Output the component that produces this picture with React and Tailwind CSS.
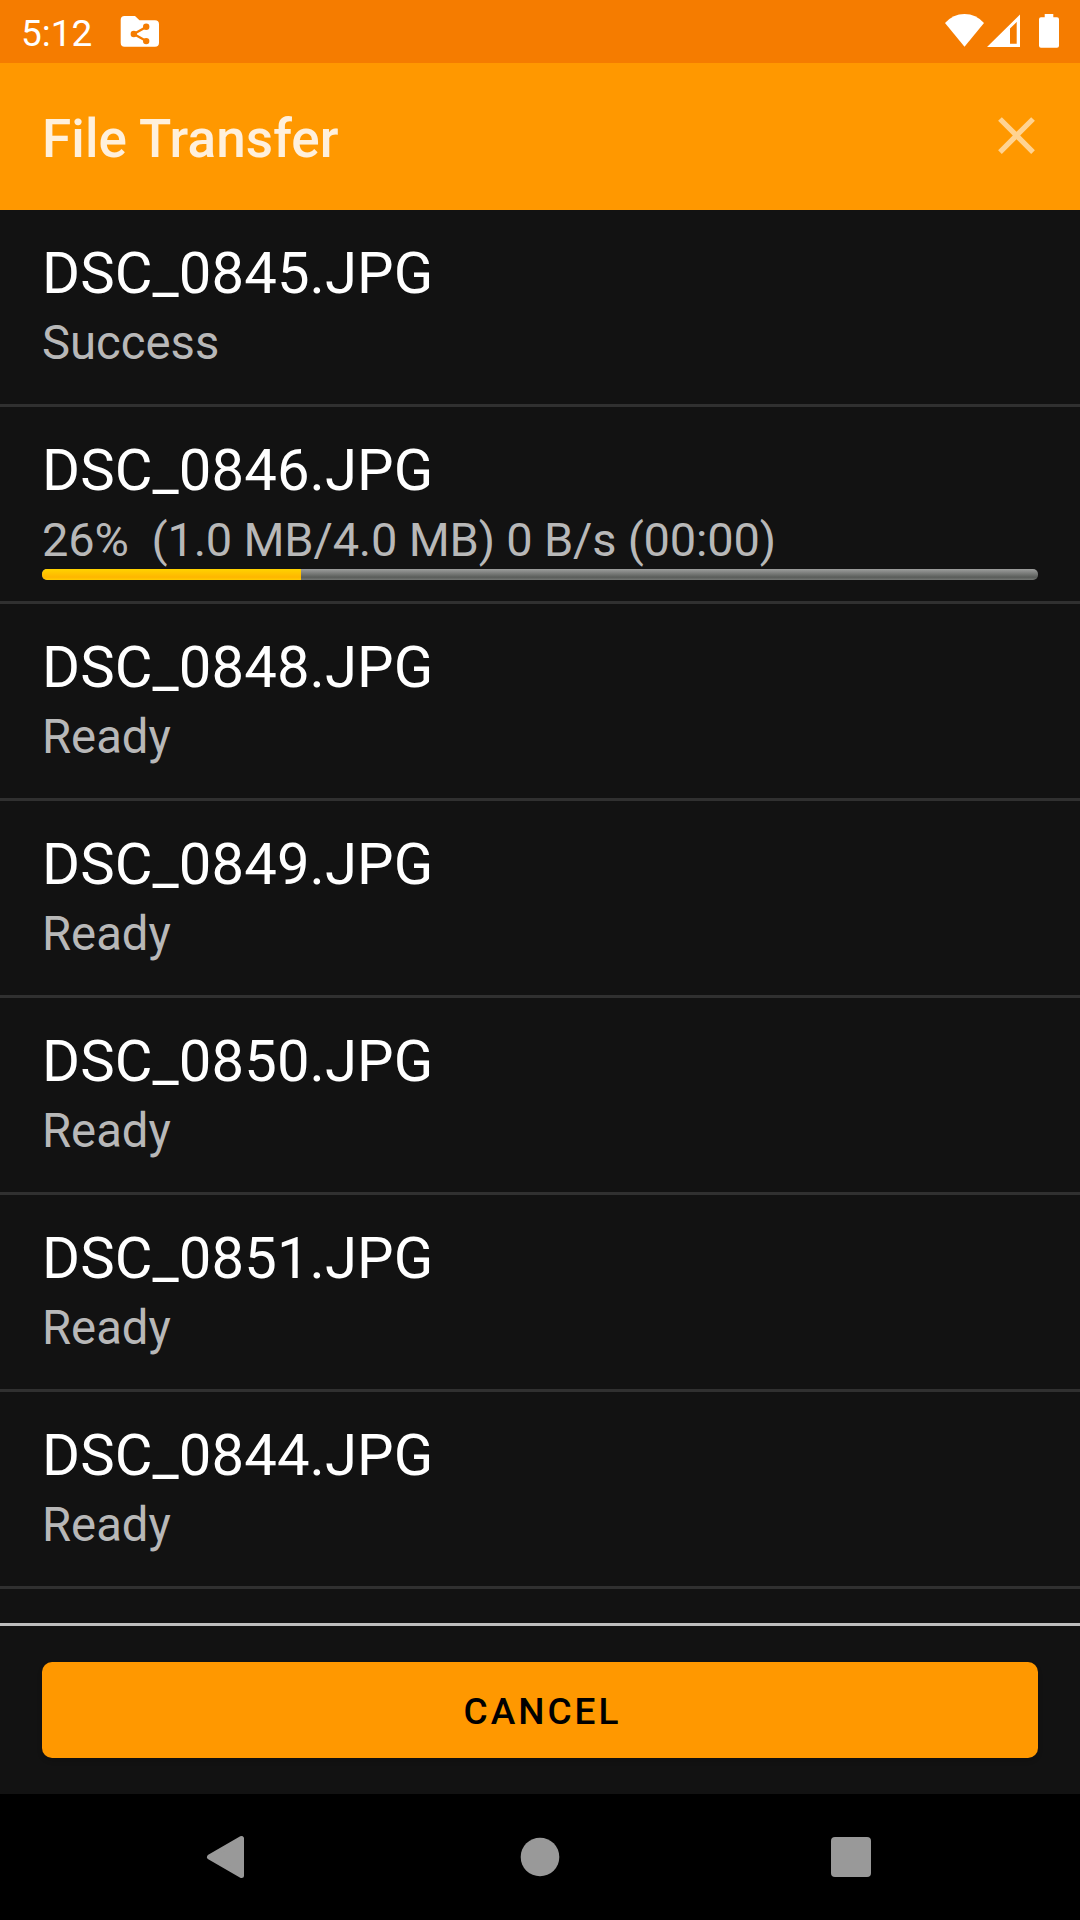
import React from "react";

const files = [
  ["DSC_0845.JPG", "Success"],
  ["DSC_0846.JPG", "26%  (1.0 MB/4.0 MB) 0 B/s (00:00)", 26],
  ["DSC_0848.JPG", "Ready"],
  ["DSC_0849.JPG", "Ready"],
  ["DSC_0850.JPG", "Ready"],
  ["DSC_0851.JPG", "Ready"],
  ["DSC_0844.JPG", "Ready"],
];

function FileRow({ name, status, progress }) {
  const active = progress !== undefined;
  return (
    <li className="flex h-[197px] flex-col border-b-3 border-[#303030] px-[42px] pt-[28px]">
      <div className="h-[70px] text-[58px] leading-[70px] tracking-[0.1px] text-white">{name}</div>
      <div className={`h-[70px] whitespace-pre leading-[70px] text-[#b8b8b8] ${active ? "text-[47px] tracking-[-0.2px]" : "text-[47.25px]"}`}>{status}</div>
      {active && (
        <div className="-mt-[6px] h-[11px] shrink-0 overflow-hidden rounded-[5px] bg-[linear-gradient(#9d9e9d,#5a5d5a_75%,#747674)]">
          <div className="h-full bg-[linear-gradient(#ffd300,#ffb600_75%,#ffcb00)]" style={{ width: `${progress}%` }} />
        </div>
      )}
    </li>
  );
}

export default function App() {
  return (
    <div className="flex h-[1920px] w-[1080px] flex-col overflow-hidden bg-[#121212] font-['Roboto',sans-serif]">
      <div className="flex h-[63px] shrink-0 items-center bg-[#f57c00] pl-[21px] text-white">
        <span className="mt-[4px] w-[99px] text-[37px] leading-[43px]">5:12</span>
        <svg className="h-[63px] w-[40px]" viewBox="120 0 40 63">
          <path fill="#fff" d="M124.500 16H135L139.500 20.200H155Q159 20.200 159 24.200V42.800Q159 46.800 155 46.800H124.500Q120.700 46.800 120.700 42.800V20Q120.700 16 124.500 16Z" />
          <path fill="none" stroke="#f57c00" strokeWidth="2.300" d="M146.200 27 133.800 34l12.400 7" />
          <g fill="#f57c00">
            <circle cx="146.200" cy="26.800" r="3.200" />
            <circle cx="133.800" cy="34" r="3.200" />
            <circle cx="146.200" cy="41.100" r="3.200" />
          </g>
        </svg>
        <svg className="ml-auto h-[63px] w-[136px]" viewBox="944 0 136 63" fill="#fff">
          <path d="M945 23Q953 14 964.500 14T984 23L964.500 46.800Z" />
          <path fillRule="evenodd" d="M987 47 1020 14.500V47ZM1010 28.500V43.700H1016.700V22Z" />
          <path d="M1044.700 14H1053.300V17.300H1057Q1059 17.300 1059 19.300V45.700Q1059 47.800 1057 47.800H1041Q1039 47.800 1039 45.700V19.300Q1039 17.300 1041 17.300H1044.700Z" />
        </svg>
      </div>
      <header className="flex h-[147px] shrink-0 items-center justify-between bg-[#ff9800] pl-[42px] pr-[32px]">
        <h1 className="mt-[4px] text-[53px] font-medium leading-[62px] tracking-[0.1px] text-[#fff0dc]">File Transfer</h1>
        <svg className="-mt-[2px] h-[63px] w-[63px]" viewBox="0 0 24 24" fill="#ffd392">
          <path d="M19 6.410 17.590 5 12 10.590 6.410 5 5 6.410 10.590 12 5 17.590 6.410 19 12 13.410 17.590 19 19 17.590 13.410 12z" />
        </svg>
      </header>
      <ul className="h-[1413px] shrink-0 overflow-hidden">
        {files.map(([name, status, progress]) => (
          <FileRow key={name} name={name} status={status} progress={progress} />
        ))}
      </ul>
      <div className="flex h-[171px] shrink-0 flex-col border-t-3 border-[#bdbdbd] px-[42px] pt-[36px]">
        <button className="h-[96px] rounded-[10px] bg-[#ff9800] pl-[5px] pt-[4px] text-[37px] font-medium tracking-[3px] text-black shadow-[0_3px_5px_rgba(0,0,0,0.15)]">CANCEL</button>
      </div>
      <nav className="flex h-[126px] shrink-0 bg-black">
        <svg className="h-[126px] w-[1080px]" viewBox="0 0 1080 126" fill="#999">
          <path stroke="#999" strokeWidth="5" strokeLinejoin="round" d="M209.500 63 241.500 44.500V81.500Z" />
          <circle cx="540" cy="63" r="19.300" />
          <rect x="831" y="43" width="40" height="40" rx="4" />
        </svg>
      </nav>
    </div>
  );
}
